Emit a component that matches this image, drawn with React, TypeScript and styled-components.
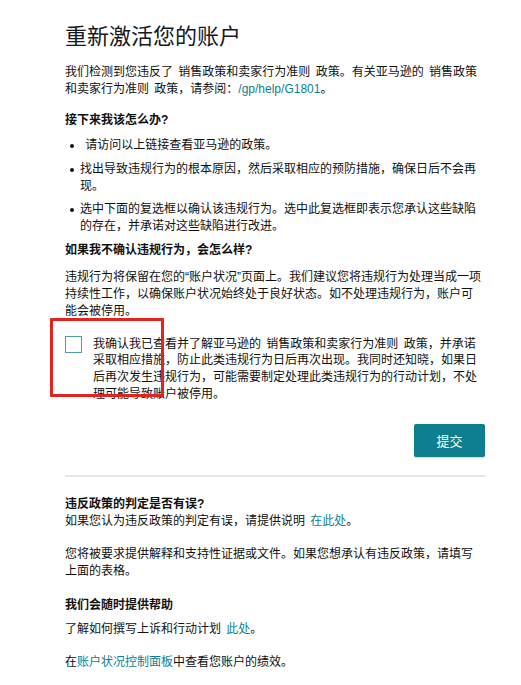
import * as React from "react"
import styled, { createGlobalStyle } from "styled-components"

const GlobalStyle = createGlobalStyle`
  html, body {
    margin: 0;
    padding: 0;
    background: #ffffff;
  }
  body {
    font-family: "Liberation Sans", "Noto Sans CJK SC", sans-serif;
    color: #0f1111;
    font-size: 12px;
    line-height: 17px;
    word-spacing: 2px;
  }
`

const Page = styled.main`
  display: flex;
  flex-direction: column;
  width: 420px;
  padding: 22px 0 20px 65px;
`

const Title = styled.h1`
  margin: 0;
  font-size: 22px;
  line-height: 30px;
  font-weight: 400;
  color: #16191f;
  word-spacing: 0;
`

const Text = styled.p<{ $gap?: number }>`
  margin: ${(p) => p.$gap ?? 0}px 0 0;
  padding-right: 2px;
  font-size: 12px;
  line-height: 17px;
`

const Heading = styled.h3<{ $gap?: number }>`
  margin: ${(p) => p.$gap ?? 0}px 0 0;
  font-size: 12px;
  line-height: 17px;
  font-weight: 700;
  color: #0f1111;
`

const A = styled.a`
  color: #0c8190;
  text-decoration: none;
`

const List = styled.ul`
  list-style: none;
  margin: 8px 0 0;
  padding: 0 2px 0 15px;
  display: flex;
  flex-direction: column;
  gap: 6.5px;
`

const Item = styled.li`
  position: relative;
  line-height: 17px;

  &::before {
    content: "";
    position: absolute;
    left: -10px;
    top: 7px;
    width: 4px;
    height: 4px;
    border-radius: 50%;
    background: #111;
  }
`

const ConfirmRow = styled.label`
  position: relative;
  display: flex;
  align-items: flex-start;
  gap: 11px;
  margin-top: 16px;
`

const Box = styled.span`
  flex: none;
  width: 15px;
  height: 15px;
  border: 1px solid #4f9ea5;
  background: #fff;
`

const ConfirmText = styled.span`
  width: 386px;
  line-height: 16.8px;
`

const Highlight = styled.span`
  position: absolute;
  left: -15px;
  top: -18px;
  width: 108px;
  height: 73px;
  border: 3px solid #e3241e;
  border-radius: 1px;
  pointer-events: none;
`

const Actions = styled.div`
  display: flex;
  justify-content: flex-end;
  margin-top: 21px;
`

const Submit = styled.button`
  width: 71px;
  height: 33px;
  border: none;
  border-radius: 2px;
  background: #0e7f8e;
  color: #ffffff;
  font-family: "Liberation Sans", "Noto Sans CJK SC", sans-serif;
  font-size: 13px;
  box-shadow: 0 1px 1px rgba(0, 0, 0, 0.15);
  cursor: pointer;
`

const Divider = styled.hr`
  margin: 18px 0 0;
  border: none;
  height: 2px;
  background: #e6e6e6;
`

export default function App() {
  return (
    <>
      <GlobalStyle />
      <Page>
        <Title>重新激活您的账户</Title>
        <Text $gap={12}>
          我们检测到您违反了 销售政策和卖家行为准则 政策。有关亚马逊的 销售政策和卖家行为准则 政策，请参阅：
          <A href="#">/gp/help/G1801</A>。
        </Text>

        <Heading $gap={14}>接下来我该怎么办?</Heading>
        <List>
          <Item>{"\u00a0"}请访问以上链接查看亚马逊的政策。</Item>
          <Item>找出导致违规行为的根本原因，然后采取相应的预防措施，确保日后不会再现。</Item>
          <Item>选中下面的复选框以确认该违规行为。选中此复选框即表示您承认这些缺陷的存在，并承诺对这些缺陷进行改进。</Item>
        </List>

        <Heading $gap={6.5}>如果我不确认违规行为，会怎么样?</Heading>
        <Text $gap={10}>
          违规行为将保留在您的“账户状况”页面上。我们建议您将违规行为处理当成一项持续性工作，以确保账户状况始终处于良好状态。如不处理违规行为，账户可能会被停用。
        </Text>

        <ConfirmRow>
          <Box />
          <ConfirmText>
            我确认我已查看并了解亚马逊的 销售政策和卖家行为准则 政策，并承诺采取相应措施，防止此类违规行为日后再次出现。我同时还知晓，如果日后再次发生违规行为，可能需要制定处理此类违规行为的行动计划，不处理可能导致账户被停用。
          </ConfirmText>
          <Highlight />
        </ConfirmRow>

        <Actions>
          <Submit type="button">提交</Submit>
        </Actions>

        <Divider />

        <Heading $gap={19}>违反政策的判定是否有误?</Heading>
        <Text>
          如果您认为违反政策的判定有误，请提供说明 <A href="#">在此处</A>。
        </Text>
        <Text $gap={16}>
          您将被要求提供解释和支持性证据或文件。如果您想承认有违反政策，请填写上面的表格。
        </Text>

        <Heading $gap={17}>我们会随时提供帮助</Heading>
        <Text $gap={7}>
          了解如何撰写上诉和行动计划 <A href="#">此处</A>。
        </Text>
        <Text $gap={16}>
          在<A href="#">账户状况控制面板</A>中查看您账户的绩效。
        </Text>
      </Page>
    </>
  )
}
